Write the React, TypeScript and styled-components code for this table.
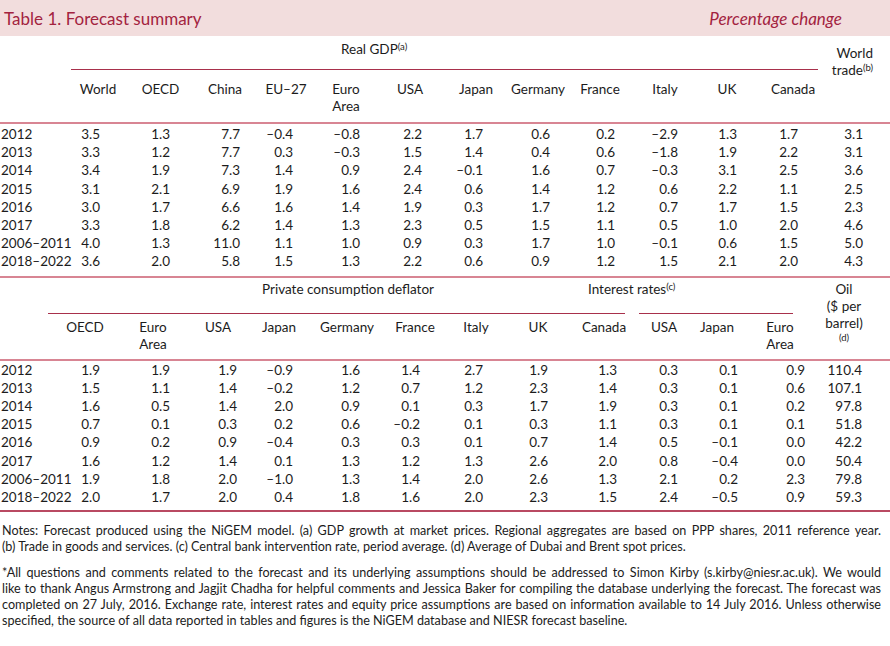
import React from 'react';
import styled, { createGlobalStyle } from 'styled-components';

const GlobalStyle = createGlobalStyle`
  html, body {
    margin: 0;
    padding: 0;
    background: #ffffff;
  }
  body {
    font-family: Lato, 'Noto Sans', sans-serif;
    color: #1c1c1c;
  }
`;

interface Col {
  readonly head: React.ReactNode;
  readonly w: number;
  readonly pr: number;
}

const gdpCols: Col[] = [
  { head: 'World', w: 62, pr: 29 },
  { head: 'OECD', w: 63, pr: 22 },
  { head: 'China', w: 66, pr: 18 },
  { head: 'EU–27', w: 56, pr: 21 },
  { head: <>Euro<br />Area</>, w: 64, pr: 18 },
  { head: 'USA', w: 64, pr: 20 },
  { head: 'Japan', w: 68, pr: 27 },
  { head: 'Germany', w: 56, pr: 16 },
  { head: 'France', w: 68, pr: 19 },
  { head: 'Italy', w: 62, pr: 18 },
  { head: 'UK', w: 62, pr: 21 },
  { head: 'Canada', w: 70, pr: 30 },
  { head: null, w: 62, pr: 27 },
];

const priceCols: Col[] = [
  { head: 'OECD', w: 66, pr: 18 },
  { head: <>Euro<br />Area</>, w: 70, pr: 18 },
  { head: 'USA', w: 60, pr: 11 },
  { head: 'Japan', w: 62, pr: 17 },
  { head: 'Germany', w: 74, pr: 24 },
  { head: 'France', w: 62, pr: 26 },
  { head: 'Italy', w: 60, pr: 23 },
  { head: 'UK', w: 64, pr: 22 },
  { head: 'Canada', w: 68, pr: 21 },
  { head: 'USA', w: 52, pr: 12 },
  { head: 'Japan', w: 54, pr: 6 },
  { head: <>Euro<br />Area</>, w: 72, pr: 11 },
  { head: null, w: 56, pr: 10 },
];

const gdpRows: [string, string[]][] = [
  ['2012', ['3.5', '1.3', '7.7', '–0.4', '–0.8', '2.2', '1.7', '0.6', '0.2', '–2.9', '1.3', '1.7', '3.1']],
  ['2013', ['3.3', '1.2', '7.7', '0.3', '–0.3', '1.5', '1.4', '0.4', '0.6', '–1.8', '1.9', '2.2', '3.1']],
  ['2014', ['3.4', '1.9', '7.3', '1.4', '0.9', '2.4', '–0.1', '1.6', '0.7', '–0.3', '3.1', '2.5', '3.6']],
  ['2015', ['3.1', '2.1', '6.9', '1.9', '1.6', '2.4', '0.6', '1.4', '1.2', '0.6', '2.2', '1.1', '2.5']],
  ['2016', ['3.0', '1.7', '6.6', '1.6', '1.4', '1.9', '0.3', '1.7', '1.2', '0.7', '1.7', '1.5', '2.3']],
  ['2017', ['3.3', '1.8', '6.2', '1.4', '1.3', '2.3', '0.5', '1.5', '1.1', '0.5', '1.0', '2.0', '4.6']],
  ['2006–2011', ['4.0', '1.3', '11.0', '1.1', '1.0', '0.9', '0.3', '1.7', '1.0', '–0.1', '0.6', '1.5', '5.0']],
  ['2018–2022', ['3.6', '2.0', '5.8', '1.5', '1.3', '2.2', '0.6', '0.9', '1.2', '1.5', '2.1', '2.0', '4.3']],
];

const priceRows: [string, string[]][] = [
  ['2012', ['1.9', '1.9', '1.9', '–0.9', '1.6', '1.4', '2.7', '1.9', '1.3', '0.3', '0.1', '0.9', '110.4']],
  ['2013', ['1.5', '1.1', '1.4', '–0.2', '1.2', '0.7', '1.2', '2.3', '1.4', '0.3', '0.1', '0.6', '107.1']],
  ['2014', ['1.6', '0.5', '1.4', '2.0', '0.9', '0.1', '0.3', '1.7', '1.9', '0.3', '0.1', '0.2', '97.8']],
  ['2015', ['0.7', '0.1', '0.3', '0.2', '0.6', '–0.2', '0.1', '0.3', '1.1', '0.3', '0.1', '0.1', '51.8']],
  ['2016', ['0.9', '0.2', '0.9', '–0.4', '0.3', '0.3', '0.1', '0.7', '1.4', '0.5', '–0.1', '0.0', '42.2']],
  ['2017', ['1.6', '1.2', '1.4', '0.1', '1.3', '1.2', '1.3', '2.6', '2.0', '0.8', '–0.4', '0.0', '50.4']],
  ['2006–2011', ['1.9', '1.8', '2.0', '–1.0', '1.3', '1.4', '2.0', '2.6', '1.3', '2.1', '0.2', '2.3', '79.8']],
  ['2018–2022', ['2.0', '1.7', '2.0', '0.4', '1.8', '1.6', '2.0', '2.3', '1.5', '2.4', '–0.5', '0.9', '59.3']],
];

const template = (label: number, cols: Col[]) => `${label}px ${cols.map((c) => `${c.w}px`).join(' ')}`;

const Table = ({ label, cols, rows, last }: {
  label: number; cols: Col[]; rows: [string, string[]][]; last?: boolean;
}) => (
  <Body $cols={template(label, cols)} $last={last}>
    {rows.map(([year, values]) => (
      <React.Fragment key={year}>
        <RowLabel>{year}</RowLabel>
        {values.map((v, i) => (
          <Num key={i} $pr={cols[i].pr}>{v}</Num>
        ))}
      </React.Fragment>
    ))}
  </Body>
);

const App = () => (
  <Page>
    <GlobalStyle />
    <TitleBar>
      <Title>Table 1. Forecast summary</Title>
      <Unit>Percentage change</Unit>
    </TitleBar>

    <Head $cols={template(67, gdpCols)} $rows="34px 52px">
      <GroupCell $from={2} $to={14} $ml={4} $mr={10} $indent={270} $pt={5}>
        Real GDP<Sup>(a)</Sup>
      </GroupCell>
      <SideHead $col={14} $pt={9} $align="right" $pr={17}>
        World<br />trade<Sup>(b)</Sup>
      </SideHead>
      {gdpCols.slice(0, 12).map((c, i) => (
        <ColHead key={i} $col={i + 2} $pt={11}>{c.head}</ColHead>
      ))}
    </Head>
    <Table label={67} cols={gdpCols} rows={gdpRows} />

    <Head $cols={template(52, priceCols)} $rows="36px 45px">
      <GroupCell $from={2} $to={11} $ml={-4} $mr={13} $indent={214} $pt={3}>
        Private consumption deflator
      </GroupCell>
      <GroupCell $from={11} $to={14} $ml={1} $mr={23} $indent={-51} $pt={3}>
        Interest rates<Sup>(c)</Sup>
      </GroupCell>
      <SideHead $col={14} $pt={3} $align="center" $pr={0}>
        Oil<br />($ per<br />barrel)<br /><Sup>(d)</Sup>
      </SideHead>
      {priceCols.slice(0, 12).map((c, i) => (
        <ColHead key={i} $col={i + 2} $pt={5}>{c.head}</ColHead>
      ))}
    </Head>
    <Table label={52} cols={priceCols} rows={priceRows} last />

    <Notes>
      <Para>
        <Line $fill>
          Notes: Forecast produced using the NiGEM model. (a) GDP growth at market prices. Regional aggregates are based on PPP shares, 2011 reference year.
        </Line>
        <Line>
          (b) Trade in goods and services. (c) Central bank intervention rate, period average. (d) Average of Dubai and Brent spot prices.
        </Line>
      </Para>
      <Para>
        <Line $fill>
          *All questions and comments related to the forecast and its underlying assumptions should be addressed to Simon Kirby (s.kirby@niesr.ac.uk). We would
        </Line>
        <Line $fill>
          like to thank Angus Armstrong and Jagjit Chadha for helpful comments and Jessica Baker for compiling the database underlying the forecast. The forecast was
        </Line>
        <Line $fill>
          completed on 27 July, 2016. Exchange rate, interest rates and equity price assumptions are based on information available to 14 July 2016. Unless otherwise
        </Line>
        <Line>
          specified, the source of all data reported in tables and figures is the NiGEM database and NIESR forecast baseline.
        </Line>
      </Para>
    </Notes>
  </Page>
);

const Page = styled.div`
  width: 890px;
  font-size: 13.5px;
`;

const TitleBar = styled.div`
  height: 36px;
  background: #f2dddd;
  display: flex;
  align-items: center;
  justify-content: space-between;
  padding: 0 48px 0 4px;
  color: #a3233f;
`;

const Title = styled.h1`
  margin: 0;
  font-size: 17px;
  font-weight: 400;
`;

const Unit = styled.span`
  font-size: 17px;
  font-style: italic;
`;

const Head = styled.div<{ $cols: string; $rows: string }>`
  display: grid;
  grid-template-columns: ${(p) => p.$cols};
  grid-template-rows: ${(p) => p.$rows};
  border-bottom: 2px solid #d88593;
  line-height: 17px;
`;

const GroupCell = styled.div<{
  $from: number; $to: number; $ml: number; $mr: number; $indent: number; $pt: number;
}>`
  grid-row: 1;
  grid-column: ${(p) => p.$from} / ${(p) => p.$to};
  margin: 0 ${(p) => p.$mr}px 0 ${(p) => p.$ml}px;
  padding-top: ${(p) => p.$pt}px;
  text-indent: ${(p) => p.$indent}px;
  border-bottom: 1px solid #a8304b;
  white-space: nowrap;
`;

const SideHead = styled.div<{ $col: number; $pt: number; $align: string; $pr: number }>`
  grid-row: 1 / 3;
  grid-column: ${(p) => p.$col};
  padding-top: ${(p) => p.$pt}px;
  padding-right: ${(p) => p.$pr}px;
  text-align: ${(p) => p.$align};
  white-space: nowrap;
`;

const ColHead = styled.div<{ $col: number; $pt: number }>`
  grid-row: 2;
  grid-column: ${(p) => p.$col};
  padding-top: ${(p) => p.$pt}px;
  text-align: center;
  white-space: nowrap;
`;

const Sup = styled.span`
  font-size: 9.5px;
  vertical-align: 4px;
  line-height: 0;
`;

const Body = styled.div<{ $cols: string; $last?: boolean }>`
  display: grid;
  grid-template-columns: ${(p) => p.$cols};
  grid-auto-rows: 18.2px;
  align-items: center;
  padding: ${(p) => (p.$last ? '0 0 4px' : '1px 0 5px')};
  border-bottom: 2px solid ${(p) => (p.$last ? '#b94a62' : '#d88593')};
`;

const RowLabel = styled.div`
  padding-left: 1px;
  white-space: nowrap;
`;

const Num = styled.div<{ $pr: number }>`
  text-align: right;
  padding-right: ${(p) => p.$pr}px;
  white-space: nowrap;
`;

const Notes = styled.div`
  width: 879px;
  padding: 11px 0 0 2px;
  font-size: 12.6px;
  line-height: 16px;
`;

const Para = styled.div`
  margin-bottom: 10px;
`;

const Line = styled.div<{ $fill?: boolean }>`
  white-space: nowrap;
  text-align: ${(p) => (p.$fill ? 'justify' : 'left')};
  text-align-last: ${(p) => (p.$fill ? 'justify' : 'left')};
`;

export default App;
